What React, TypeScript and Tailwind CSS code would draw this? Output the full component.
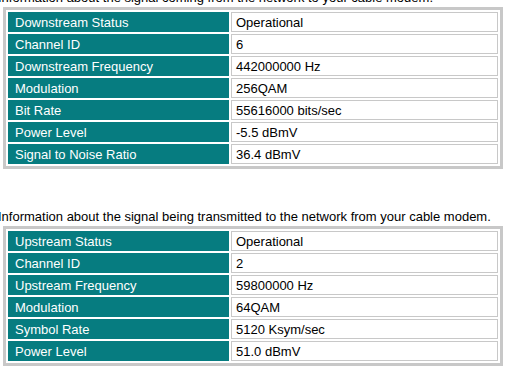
import React from 'react';

// Signal tables for the cable modem status page
const downstream: [string, string][] = [
  ['Downstream Status', 'Operational'],
  ['Channel ID', '6'],
  ['Downstream Frequency', '442000000 Hz'],
  ['Modulation', '256QAM'],
  ['Bit Rate', '55616000 bits/sec'],
  ['Power Level', '-5.5 dBmV'],
  ['Signal to Noise Ratio', '36.4 dBmV'],
];

const upstream: [string, string][] = [
  ['Upstream Status', 'Operational'],
  ['Channel ID', '2'],
  ['Upstream Frequency', '59800000 Hz'],
  ['Modulation', '64QAM'],
  ['Symbol Rate', '5120 Ksym/sec'],
  ['Power Level', '51.0 dBmV'],
];

const SignalTable: React.FC<{ rows: [string, string][] }> = ({ rows }) => (
  <div className="ml-[3px] mt-[2px] w-[500px] border-[3px] border-[#c8c8c8] p-[2px] flex flex-col gap-[2px]">
    {rows.map(([label, value]) => (
      <div key={label} className="flex gap-[2px] h-5">
        <div className="w-[221px] flex items-center bg-[#067c80] border border-[#067c80] pl-[6px] text-white">
          {label}
        </div>
        <div className="flex-1 flex items-center bg-white border border-[#c8c8c8] pl-[4px] text-black">
          {value}
        </div>
      </div>
    ))}
  </div>
);

export default function App() {
  return (
    <div className="w-[507px] h-[375px] overflow-hidden bg-white font-['Liberation_Sans',Arial,sans-serif] text-[13px] leading-[15px] text-black">
      <div className="-mt-[10px]">
        <p className="-ml-[2px] whitespace-nowrap">
          Information about the signal coming from the network to your cable modem.
        </p>
        <SignalTable rows={downstream} />
        <p className="-ml-[2px] mt-[40px] whitespace-nowrap">
          Information about the signal being transmitted to the network from your cable modem.
        </p>
        <SignalTable rows={upstream} />
      </div>
    </div>
  );
}
